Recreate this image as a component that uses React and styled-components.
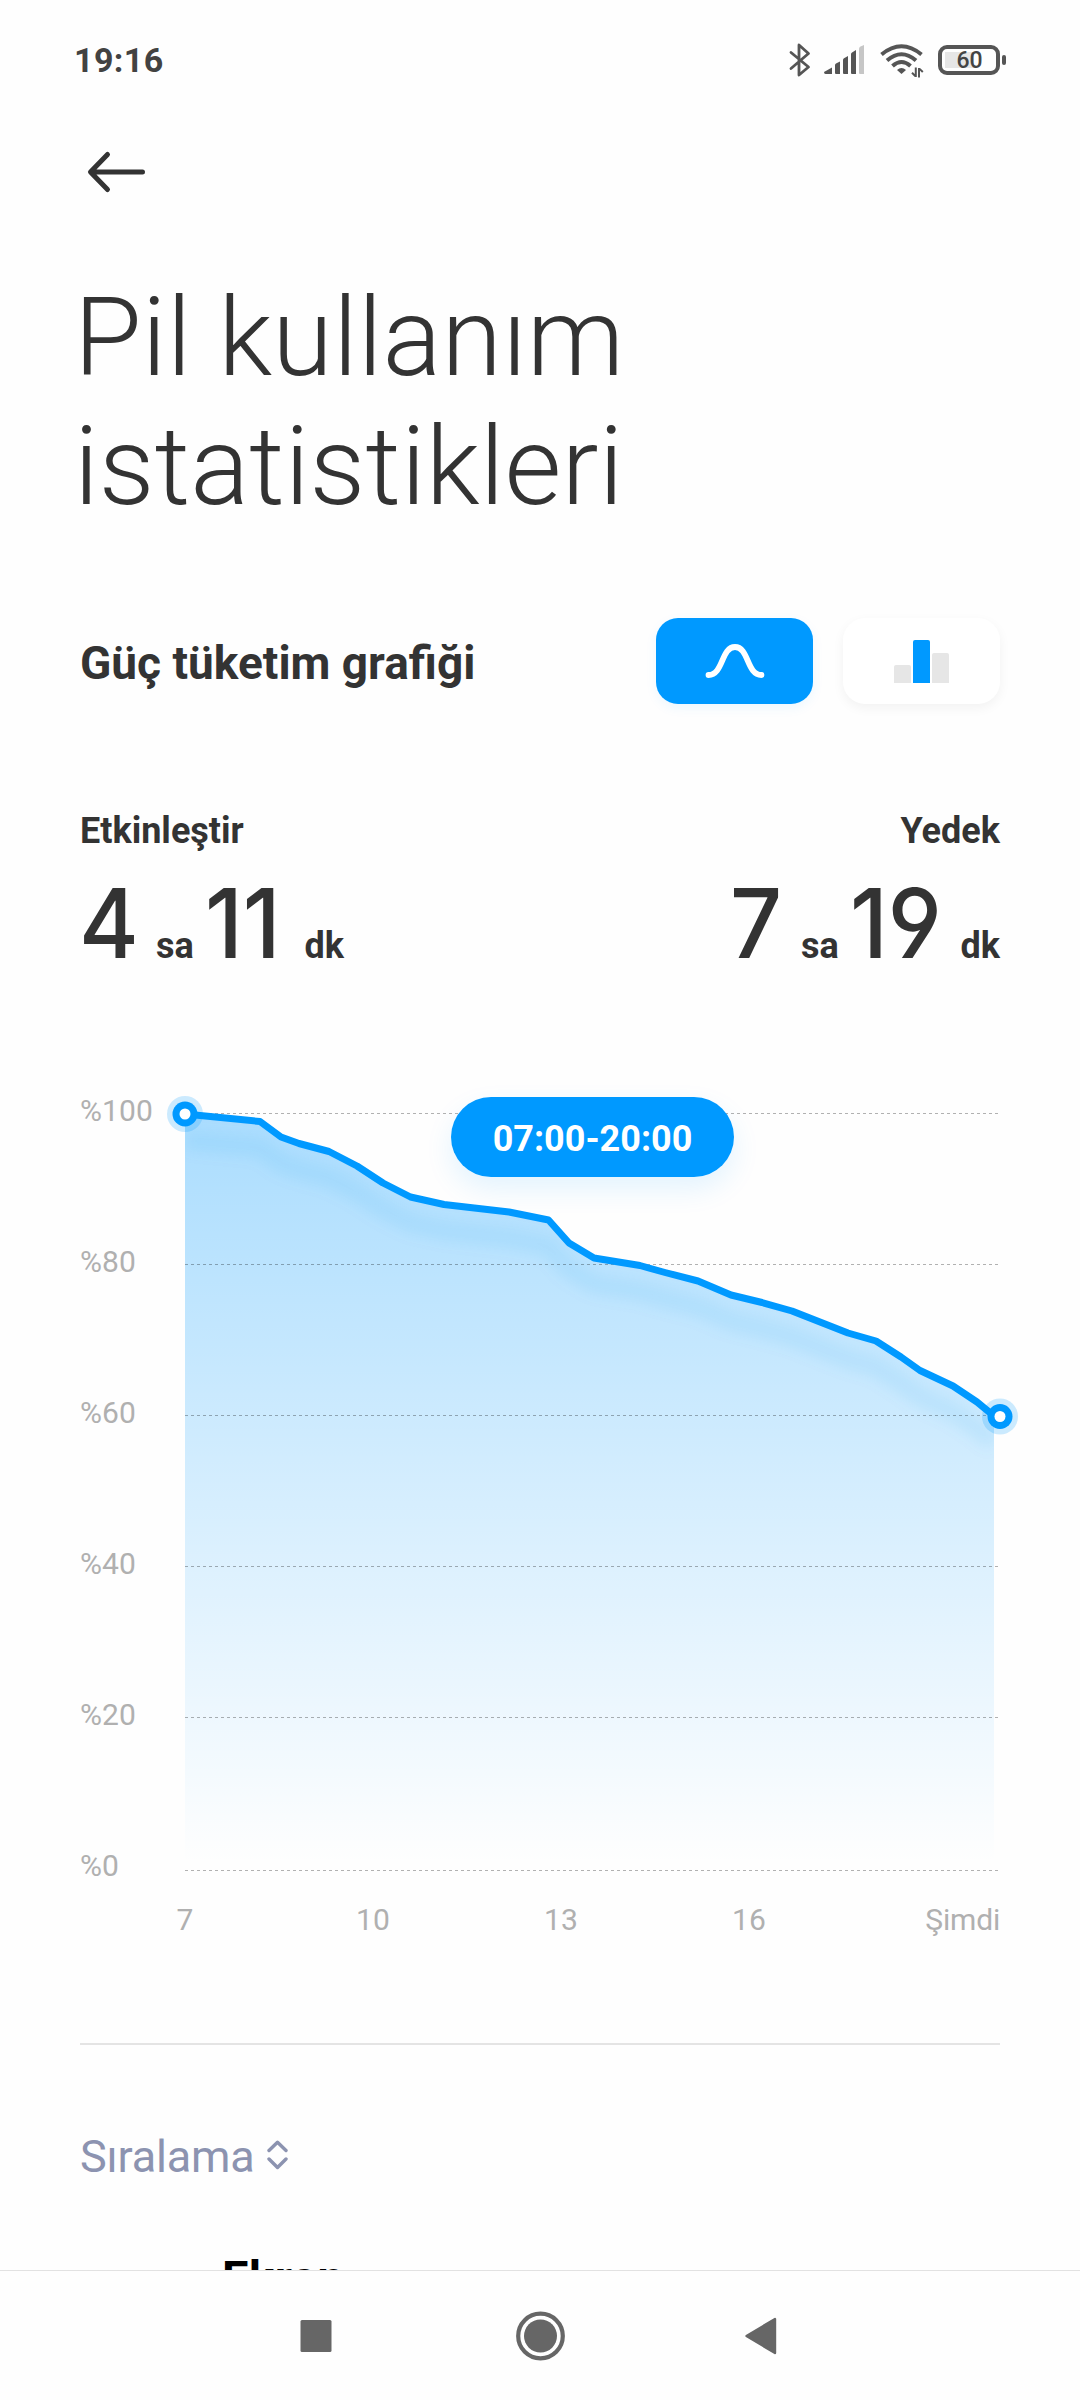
import React from "react";
import styled, { createGlobalStyle } from "styled-components";

const GlobalStyle = createGlobalStyle`
  * {
    box-sizing: border-box;
  }
  body {
    margin: 0;
    background-color: #fefefe;
    font-family: Roboto, sans-serif;
    color: #333333;
  }
`;

const Container = styled.div`
  width: 1080px;
  height: 2400px;
  display: flex;
  flex-direction: column;
  overflow: hidden;
  background-color: #fefefe;
`;
const Screen = styled.div`
  height: 2270px;
  padding: 0 80px;
  overflow: hidden;
`;
const StatusBar = styled.div`
  height: 120px;
  margin: 0 -6px 0 -6px;
  display: flex;
  align-items: center;
  justify-content: space-between;
`;
const Time = styled.span`
  font-size: 34px;
  font-weight: 700;
  letter-spacing: 0.4px;
  color: #424242;
`;
const StatusIcons = styled.div`
  display: flex;
  align-items: center;
`;
const Battery = styled.div`
  width: 62px;
  height: 30px;
  margin-left: 14px;
  padding: 2px 0 0 1px;
  border: 4px solid #555555;
  border-radius: 9px;
  display: flex;
  align-items: center;
  justify-content: center;
  font-size: 23px;
  line-height: 22px;
  font-weight: 500;
  color: #444444;
  background: linear-gradient(#e6e6e6, #e6e6e6) 3px 3px / 29px 16px no-repeat;
`;
const BatteryTip = styled.div`
  width: 4px;
  height: 10px;
  margin-left: 2px;
  border-radius: 2px;
  background-color: #555555;
`;
const Header = styled.div`
  height: 103px;
  padding-left: 6px;
  display: flex;
  align-items: center;
`;
const Title = styled.h1`
  margin: 50px 0 0 -6px;
  width: 700px;
  font-size: 110px;
  line-height: 129px;
  font-weight: 300;
  letter-spacing: 0.1px;
`;
const SectionHeader = styled.div`
  height: 86px;
  margin-top: 87px;
  display: flex;
  align-items: center;
  justify-content: space-between;
`;
const SectionTitle = styled.h2`
  margin: 0;
  padding-top: 4px;
  font-size: 46px;
  font-weight: 700;
`;
const Toggle = styled.div`
  display: flex;
  gap: 30px;
`;
const ToggleButton = styled.button`
  width: 157px;
  height: 86px;
  padding: 0;
  border: none;
  border-radius: 22px;
  display: flex;
  align-items: center;
  justify-content: center;
  background-color: ${(props) => (props.$active ? "#0099ff" : "white")};
  box-shadow: 0 4px 12px
    ${(props) => (props.$active ? "rgba(0, 153, 255, 0.07)" : "rgba(0, 0, 0, 0.05)")};
`;
const Stats = styled.div`
  margin-top: 106px;
  display: flex;
  justify-content: space-between;
`;
const Stat = styled.div`
  display: flex;
  flex-direction: column;
  align-items: ${(props) => (props.$right ? "flex-end" : "flex-start")};
`;
const StatLabel = styled.span`
  font-size: 36px;
  line-height: 42px;
  font-weight: 700;
`;
const StatValue = styled.div`
  margin: 23px 0 0 -1px;
  display: flex;
  align-items: baseline;
`;
const Digits = styled.span`
  font-family: Inter, sans-serif;
  font-feature-settings: "cv04";
  font-size: 96px;
  line-height: 96px;
  font-weight: 550;
  letter-spacing: 0;
  transform: scaleX(0.95);
  transform-origin: left;
`;
const Unit = styled.span`
  margin: 0 ${(props) => (props.$last ? "0" : "11px")} 0 ${(props) => props.$gap}px;
  font-size: 36px;
  font-weight: 700;
`;
const Chart = styled.div`
  position: relative;
  margin-top: 121px;
  display: flex;
`;
const YAxis = styled.div`
  width: 105px;
  padding-top: 1px;
  display: flex;
  flex-direction: column;
  gap: 115px;
`;
const AxisLabel = styled.span`
  font-size: 30px;
  line-height: 36px;
  letter-spacing: 0.1px;
  color: #b0b0b0;
`;
const Plot = styled.svg`
  margin-top: 21px;
  overflow: visible;
`;
const RangeBadge = styled.div`
  position: absolute;
  left: 371px;
  top: 5px;
  width: 283px;
  height: 80px;
  padding-top: 3px;
  border-radius: 40px;
  display: flex;
  align-items: center;
  justify-content: center;
  background-color: #0099ff;
  box-shadow: 0 12px 28px rgba(0, 153, 255, 0.11);
  color: white;
  font-size: 36px;
  font-weight: 700;
`;
const XAxis = styled.div`
  margin: 18px 0 0 11px;
  display: grid;
  grid-template-columns: repeat(4, 188px) 1fr;
  text-align: center;
  & > :last-child {
    text-align: right;
    letter-spacing: -0.2px;
  }
`;
const Hr = styled.hr`
  height: 2px;
  margin: 105px 0 0;
  border: none;
  background-color: #e4e4e4;
`;
const Sort = styled.div`
  margin-top: 86px;
  display: flex;
  align-items: center;
  gap: 13px;
  font-size: 45px;
  line-height: 52px;
  letter-spacing: -0.2px;
  color: #8c93b0;
  & svg {
    margin-bottom: 4px;
  }
`;
const AppName = styled.div`
  margin: 69px 0 0 142px;
  font-size: 47px;
  line-height: 52px;
  font-weight: 700;
  letter-spacing: 0.6px;
  color: black;
`;
const NavBar = styled.div`
  height: 130px;
  padding: 0 303px 0 300px;
  border-top: 1px solid #e2e2e2;
  display: flex;
  align-items: center;
  justify-content: space-between;
`;

// x, y in pixels from the %100 / 07:00 corner
const points = [
  [0, 1], [75, 8.5], [96, 24], [114, 30.5], [144, 38.5], [172, 53], [198, 70],
  [225.5, 84], [259, 91.5], [324, 99], [363.5, 107], [384, 130], [409, 145],
  [455, 152.5], [480, 159.5], [513, 168], [546, 182], [577, 189.5], [607, 198],
  [663, 220], [691, 228], [716, 244], [735, 257.5], [768, 273], [792, 289],
  [809, 303],
];
const line = points.map((p) => p.join(",")).join(" ");
const area = `0,757 ${line} 809,757`;
const gridLines = [0.5, 151.5, 302.5, 453.5, 604.5, 757.5];

const Marker = ({ x, y }) => (
  <g>
    <circle cx={x} cy={y} r="18" fill="#0099ff" fillOpacity="0.2" />
    <circle cx={x} cy={y} r="12.5" fill="#0099ff" />
    <circle cx={x} cy={y} r="5.5" fill="white" />
  </g>
);

const BatteryChart = () => (
  <Chart>
    <YAxis>
      {[100, 80, 60, 40, 20, 0].map((value) => (
        <AxisLabel key={value}>%{value}</AxisLabel>
      ))}
    </YAxis>
    <Plot width="815" height="758" viewBox="0 0 815 758">
      <defs>
        <linearGradient id="fill" gradientUnits="userSpaceOnUse" x1="0" y1="0" x2="0" y2="750">
          <stop offset="0" stopColor="#0099ff" stopOpacity="0.33" />
          <stop offset="1" stopColor="#0099ff" stopOpacity="0" />
        </linearGradient>
        <filter id="soft" x="-10%" y="-20%" width="120%" height="140%">
          <feGaussianBlur stdDeviation="7" />
        </filter>
        <clipPath id="areaClip">
          <polygon points={area} />
        </clipPath>
      </defs>
      <polygon points={area} fill="url(#fill)" />
      <g clipPath="url(#areaClip)">
        <polyline
          points={line}
          transform="translate(0 26)"
          fill="none"
          stroke="#0099e6"
          strokeOpacity="0.08"
          strokeWidth="20"
          filter="url(#soft)"
        />
      </g>
      {gridLines.map((y) => (
        <line key={y} x1="0" x2="814" y1={y} y2={y} stroke="#000" strokeOpacity="0.3" strokeDasharray="3 3" />
      ))}
      <polyline points={line} fill="none" stroke="#0099ff" strokeWidth="7" strokeLinejoin="round" />
      <Marker x={0} y={1} />
      <Marker x={815} y={303.5} />
    </Plot>
    <RangeBadge>07:00-20:00</RangeBadge>
  </Chart>
);

const Icon = styled.svg`
  margin-left: ${(props) => props.$gap || 0}px;
  margin-top: ${(props) => props.$drop || 0}px;
`;

const BluetoothIcon = () => (
  <Icon width="22" height="34" viewBox="0 0 22 34" fill="none" stroke="#555" strokeWidth="2.8" strokeLinejoin="round" strokeLinecap="round">
    <path d="M2 9.5 L19.5 24 L10 32 V2 L19.5 10.5 L2 25.5" />
  </Icon>
);

const SignalIcon = () => (
  <Icon $gap={13} width="41" height="30" viewBox="0 0 41 30" fill="#555">
    <path d="M0 27 L8 22.5 V29 H1.5 Q0 29 0 27Z" />
    <path d="M11 20 Q11 19 12 18.4 L16 16.5 V29 H12 Q11 29 11 28Z" />
    <path d="M19 15 Q19 14 20 13.2 L24 11 V29 H20 Q19 29 19 28Z" />
    <path d="M27 9 Q27 8 28 7.4 L32 5 V29 H28 Q27 29 27 28Z" />
    <path d="M35 4 Q35 2.5 36 1.8 L40 0 V29 H36 Q35 29 35 28Z" fill="#c6c6c6" />
  </Icon>
);

const WifiIcon = () => (
  <Icon $gap={15} $drop={2} width="44" height="34" viewBox="0 0 44 34" fill="none" stroke="#555">
    <path d="M1.5 10.5 Q21.5 -6 41.5 10.5" strokeWidth="4" />
    <path d="M7 16.5 Q21.5 4 36 16.5" strokeWidth="4" />
    <path d="M12.5 22 Q21.5 14 30.5 22" strokeWidth="4" />
    <path d="M17 26 Q21.5 22 26 26 L21.5 30Z" fill="#555" stroke="none" />
    <path d="M35.8 23.5 V33 M32 28.8 L35.5 32.2 M39 33.5 V24 M42.8 28 L39.3 24.6" strokeWidth="2" />
  </Icon>
);

const App = () => {
  return (
    <Container>
      <GlobalStyle />
      <Screen>
        <StatusBar>
          <Time>19:16</Time>
          <StatusIcons>
            <BluetoothIcon />
            <SignalIcon />
            <WifiIcon />
            <Battery>60</Battery>
            <BatteryTip />
          </StatusIcons>
        </StatusBar>
        <Header>
          <svg width="62" height="44" viewBox="0 0 62 44" fill="none" stroke="#333" strokeWidth="5" strokeLinecap="round" strokeLinejoin="round">
            <path d="M21.5 4.5 L4.5 22 L21.5 39.5 M5 22 H56.5" />
          </svg>
        </Header>
        <Title>Pil kullanım istatistikleri</Title>
        <SectionHeader>
          <SectionTitle>Güç tüketim grafiği</SectionTitle>
          <Toggle>
            <ToggleButton $active>
              <svg width="60" height="36" viewBox="0 0 60 36" fill="none" stroke="white" strokeWidth="5.8" strokeLinecap="round">
                <path d="M3.5 32 C18.5 32 16 4 30 4 C44 4 41.5 32 56.5 32" />
              </svg>
            </ToggleButton>
            <ToggleButton>
              <svg width="56" height="44" viewBox="0 0 56 44">
                <path d="M0 44 V28 Q0 26 2 26 H15 Q17 26 17 28 V44Z" fill="#e6e6e6" />
                <path d="M19 44 V3 Q19 1 21 1 H34 Q36 1 36 3 V44Z" fill="#0099ff" />
                <path d="M38 44 V16 Q38 14 40 14 H53 Q55 14 55 16 V44Z" fill="#e6e6e6" />
              </svg>
            </ToggleButton>
          </Toggle>
        </SectionHeader>
        <Stats>
          <Stat>
            <StatLabel>Etkinleştir</StatLabel>
            <StatValue>
              <Digits>4</Digits>
              <Unit $gap={14}>sa</Unit>
              <Digits>11</Digits>
              <Unit $gap={20} $last>dk</Unit>
            </StatValue>
          </Stat>
          <Stat $right>
            <StatLabel>Yedek</StatLabel>
            <StatValue>
              <Digits>7</Digits>
              <Unit $gap={16}>sa</Unit>
              <Digits>19</Digits>
              <Unit $gap={14} $last>dk</Unit>
            </StatValue>
          </Stat>
        </Stats>
        <BatteryChart />
        <XAxis>
          <AxisLabel>7</AxisLabel>
          <AxisLabel>10</AxisLabel>
          <AxisLabel>13</AxisLabel>
          <AxisLabel>16</AxisLabel>
          <AxisLabel>Şimdi</AxisLabel>
        </XAxis>
        <Hr />
        <Sort>
          Sıralama
          <svg width="21" height="30" viewBox="0 0 21 30" fill="none" stroke="#8c93b0" strokeWidth="3.4" strokeLinecap="round" strokeLinejoin="round">
            <path d="M2 10.5 L10.5 2.3 L19 10.5 M2 19 L10.5 27.5 L19 19" />
          </svg>
        </Sort>
        <AppName>Ekran</AppName>
      </Screen>
      <NavBar>
        <svg width="32" height="32" viewBox="0 0 32 32">
          <rect x="0.5" width="31" height="32" rx="1.5" fill="#666" />
        </svg>
        <svg width="54" height="50" viewBox="0 0 54 50">
          <circle cx="28.5" cy="25" r="22.3" fill="none" stroke="#666" strokeWidth="4.2" />
          <circle cx="28.5" cy="25" r="16.5" fill="#666" />
        </svg>
        <svg width="32" height="38" viewBox="0 0 32 38">
          <path d="M1.5 19 L30 2 V36Z" fill="#666" stroke="#666" strokeWidth="2.4" strokeLinejoin="round" />
        </svg>
      </NavBar>
    </Container>
  );
};

export default App;
